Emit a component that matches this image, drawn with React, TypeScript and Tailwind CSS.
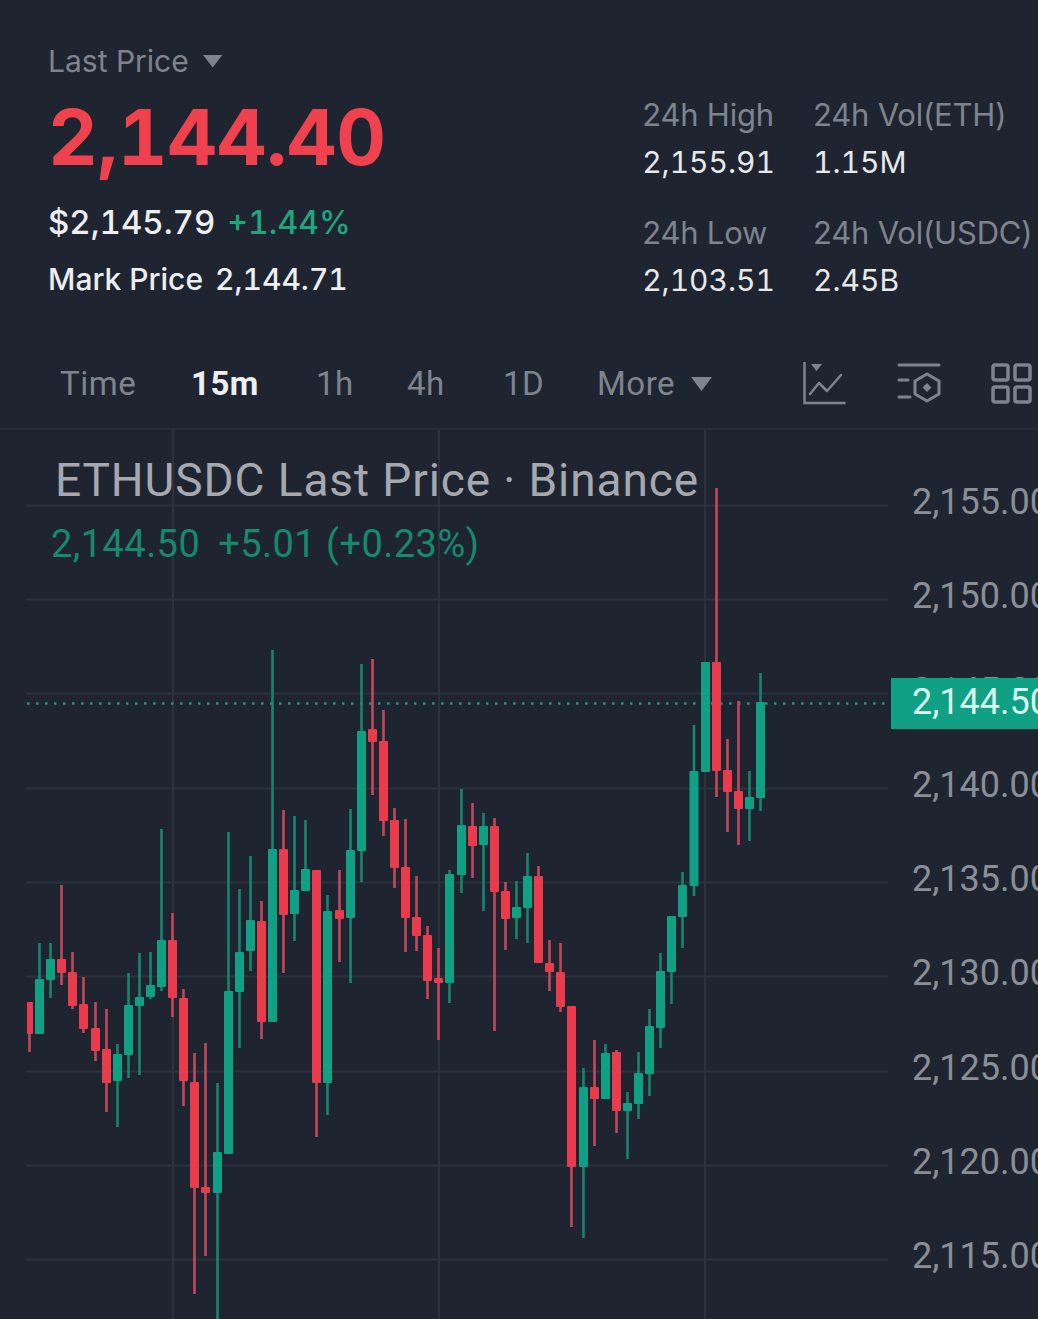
const red = "#ea3b4d";
const green = "#10a084";
const redWick = "#c2485a";
const greenWick = "#17856f";

// x, colour, wick top, body top, body bottom, wick bottom, read off the chart
const candles: [number, "r" | "g", number, number, number, number][] = [
  [29.5, "r", 1002, 1002, 1034, 1052],
  [39.5, "g", 943, 979, 1034, 1034],
  [50.5, "g", 943, 959, 980, 998],
  [61.5, "r", 885, 959, 973, 985],
  [72.5, "r", 952, 972, 1006, 1009],
  [83.5, "r", 977, 1004, 1029, 1033],
  [95.5, "r", 1002, 1028, 1051, 1061],
  [106.5, "r", 1009, 1049, 1083, 1112],
  [117.5, "g", 1044, 1054, 1081, 1127],
  [128.5, "g", 973, 1005, 1055, 1078],
  [139.5, "g", 953, 997, 1006, 1075],
  [150.5, "g", 952, 985, 997, 999],
  [161.5, "g", 829, 940, 987, 991],
  [172.5, "r", 913, 940, 998, 1017],
  [183.5, "r", 989, 998, 1081, 1106],
  [194.5, "r", 1053, 1082, 1188, 1294],
  [205.5, "r", 1043, 1187, 1193, 1256],
  [217.5, "g", 1083, 1152, 1193, 1319],
  [228.5, "g", 832, 991, 1154, 1154],
  [239.5, "g", 889, 952, 992, 1048],
  [250.5, "g", 856, 920, 951, 971],
  [261.5, "r", 901, 921, 1022, 1039],
  [272.5, "g", 650, 849, 1022, 1022],
  [283.5, "r", 810, 849, 915, 973],
  [294.5, "g", 816, 890, 914, 941],
  [305.5, "g", 820, 869, 891, 891],
  [316.5, "r", 870, 870, 1083, 1137],
  [327.5, "g", 895, 911, 1083, 1115],
  [339.5, "r", 870, 910, 919, 962],
  [350.5, "g", 809, 850, 918, 983],
  [361.5, "g", 664, 731, 851, 882],
  [372.5, "r", 659, 729, 742, 795],
  [383.5, "r", 710, 741, 821, 836],
  [394.5, "r", 808, 820, 868, 888],
  [405.5, "r", 819, 867, 918, 952],
  [416.5, "r", 876, 917, 936, 951],
  [427.5, "r", 926, 935, 981, 999],
  [438.5, "r", 948, 978, 983, 1040],
  [449.5, "g", 870, 874, 983, 1003],
  [461.5, "g", 789, 825, 875, 893],
  [472.5, "r", 803, 826, 846, 878],
  [483.5, "g", 813, 826, 845, 911],
  [494.5, "r", 818, 826, 892, 1031],
  [505.5, "r", 882, 891, 919, 950],
  [516.5, "g", 881, 907, 918, 939],
  [527.5, "g", 853, 876, 908, 943],
  [538.5, "r", 866, 876, 963, 963],
  [549.5, "r", 940, 963, 972, 991],
  [560.5, "r", 943, 972, 1007, 1012],
  [571.5, "r", 1006, 1006, 1167, 1227],
  [583.5, "g", 1068, 1087, 1167, 1238],
  [594.5, "r", 1040, 1087, 1099, 1146],
  [605.5, "g", 1044, 1053, 1099, 1099],
  [616.5, "r", 1050, 1052, 1111, 1133],
  [627.5, "g", 1092, 1103, 1111, 1159],
  [638.5, "g", 1052, 1073, 1104, 1119],
  [649.5, "g", 1009, 1026, 1074, 1096],
  [660.5, "g", 953, 971, 1028, 1048],
  [671.5, "g", 916, 916, 972, 1004],
  [682.5, "g", 872, 885, 917, 948],
  [694, "g", 725, 771, 886, 896],
  [705.5, "g", 662, 662, 772, 772],
  [716.5, "r", 488, 662, 771, 797],
  [727.5, "r", 739, 770, 792, 832],
  [738.5, "r", 701, 791, 809, 845],
  [749.5, "g", 771, 797, 809, 841],
  [760.5, "g", 673, 702, 798, 811],
];

const gridY = [505, 599, 693, 788, 882, 976, 1071, 1165, 1259];
const axis = [
  { label: "2,155.00", y: 502 },
  { label: "2,150.00", y: 596 },
  { label: "2,145.00", y: 691 },
  { label: "2,140.00", y: 785 },
  { label: "2,135.00", y: 879 },
  { label: "2,130.00", y: 973 },
  { label: "2,125.00", y: 1068 },
  { label: "2,120.00", y: 1162 },
  { label: "2,115.00", y: 1256 },
];

function CandleChart() {
  // svg is offset to page coordinates, the chart starts at y=430
  return (
    <svg className="absolute inset-0" width={1038} height={889} viewBox="0 430 1038 889">
      {gridY.map((y) => (
        <line key={y} x1={27} x2={888} y1={y + 0.5} y2={y + 0.5} stroke="#2c323c" strokeWidth={2} />
      ))}
      {[173, 439, 705].map((x) => (
        <line key={x} x1={x} x2={x} y1={430} y2={1319} stroke="#2c323c" strokeWidth={2} />
      ))}
      <line x1={27} x2={888} y1={703.5} y2={703.5} stroke="#2a8f7c" strokeWidth={2.5} strokeDasharray="2.5 6.5" />
      {candles.map(([x, c, wt, bt, bb, wb]) => (
        <g key={x}>
          <line x1={x} x2={x} y1={wt} y2={wb} stroke={c === "r" ? redWick : greenWick} strokeWidth={2.6} />
          <rect
            x={x === 29.5 ? 27 : x - 4.5}
            y={bt}
            width={x === 29.5 ? 6 : 9}
            height={bb - bt}
            rx={1}
            fill={c === "r" ? red : green}
          />
        </g>
      ))}
    </svg>
  );
}

function IndicatorIcon() {
  return (
    <svg width="44" height="46" viewBox="0 0 44 46" fill="none" stroke="#7e848e" strokeWidth="2.500">
      <path d="M1.500 1v41h41" />
      <path d="M7 33 L16 22 L24 30 L38 14" strokeLinejoin="round" strokeLinecap="round" />
      <path d="M8 3h11l-5.500 7z" fill="#7e848e" stroke="none" />
    </svg>
  );
}

function TemplateIcon() {
  return (
    <svg width="44" height="46" viewBox="0 0 44 46" fill="none" stroke="#7e848e" strokeWidth="3" strokeLinecap="round">
      <path d="M2 4h40" />
      <path d="M2 19h9M2 36h11" />
      <path d="M30 13l12 7v13l-12 7-12-7V20z" strokeLinejoin="round" />
      <path d="M30 22l4.500 4.500-4.500 4.500-4.500-4.500z" fill="#7e848e" stroke="none" />
    </svg>
  );
}

function GridIcon() {
  return (
    <svg width="42" height="42" viewBox="0 0 42 42" fill="none" stroke="#7e848e" strokeWidth="3.500">
      <rect x="2" y="2" width="15" height="15" rx="2" />
      <rect x="24" y="2" width="15" height="15" rx="2" />
      <rect x="2" y="24" width="15" height="15" rx="2" />
      <rect x="24" y="24" width="15" height="15" rx="2" />
    </svg>
  );
}

function Caret({ className }: { className: string }) {
  return <span className={`inline-block bg-[#7e848e] [clip-path:polygon(0_0,100%_0,50%_100%)] ${className}`} />;
}

function Stat({ label, value, className }: { label: string; value: string; className?: string }) {
  return (
    <div className={className}>
      <div className="text-[31px] leading-[38px] tracking-[-0.2px] text-[#7e848e]">{label}</div>
      <div className="mt-[9px] text-[30px] leading-[38px] tabular-nums text-[#e6e8ea]">{value}</div>
    </div>
  );
}

export default function App() {
  const tabs = ["15m", "1h", "4h", "1D"];
  return (
    <div className="relative h-[1319px] w-[1038px] overflow-hidden bg-[#1f2530] font-['Roboto',sans-serif]">
      {/* price header */}
      <header className="flex h-[349px] justify-between pl-[48px] pt-[43px] font-['Inter',sans-serif]">
        <div>
          <div className="flex items-center gap-[14px] text-[30px] leading-[36px] text-[#7e848e]">
            Last Price <Caret className="h-[13px] w-[20px]" />
          </div>
          <div className="mt-[14px] text-[77px] font-bold leading-[88px] tracking-[-0.3px] tabular-nums text-[#f0414f]">2,144.40</div>
          <div className="mt-[21px] flex items-baseline gap-[12px] text-[33px] font-medium leading-[40px] tabular-nums">
            <span className="text-[#eceef0]">$2,145.79</span>
            <span className="text-[32px] text-[#1fa67e]">+1.44%</span>
          </div>
          <div className="mt-[16px] flex gap-[12px] text-[30px] font-medium leading-[40px] tabular-nums text-[#eceef0]">
            <span>Mark Price</span>
            <span>2,144.71</span>
          </div>
        </div>
        <div className="flex gap-[38px] pt-[53px]">
          <div>
            <Stat label="24h High" value="2,155.91" />
            <Stat label="24h Low" value="2,103.51" className="mt-[33px]" />
          </div>
          <div className="w-[225px]">
            <Stat label="24h Vol(ETH)" value="1.15M" />
            <Stat label="24h Vol(USDC)" value="2.45B" className="mt-[33px]" />
          </div>
        </div>
      </header>

      {/* interval tabs */}
      <nav className="flex h-[81px] items-center border-b-2 border-[#282e38] pb-[9px] pl-[60px] text-[33px] tracking-[0.5px] text-[#7e848e]">
        <span className="w-[131px]">Time</span>
        <span className="w-[125px] font-bold text-[#eceef0]">{tabs[0]}</span>
        <span className="w-[91px]">{tabs[1]}</span>
        <span className="w-[96px]">{tabs[2]}</span>
        <span className="w-[94px]">{tabs[3]}</span>
        <span className="flex w-[206px] items-center gap-[16px]">
          More <Caret className="h-[14px] w-[21px]" />
        </span>
        <span className="flex items-center gap-[50px]">
          <IndicatorIcon />
          <TemplateIcon />
          <GridIcon />
        </span>
      </nav>

      {/* chart */}
      <main className="absolute inset-x-0 bottom-0 top-[430px]">
        <CandleChart />
      </main>
      <div className="relative pl-[55px] pt-[22px]">
        <div className="text-[46px] leading-[56px] tracking-[0.9px] text-[#a5a9af]">ETHUSDC Last Price · Binance</div>
        <div className="-ml-[4px] mt-[13px] flex gap-[18px] text-[38px] leading-[46px] tracking-[0.45px] text-[#16896f]">
          <span>2,144.50</span>
          <span>+5.01 (+0.23%)</span>
        </div>
      </div>

      {/* price axis */}
      {axis.map((a) => (
        <div
          key={a.label}
          className="absolute left-[912px] -translate-y-1/2 text-[36px] leading-[44px] whitespace-nowrap text-[#8a8f97]"
          style={{ top: a.y }}
        >
          {a.label}
        </div>
      ))}
      <div className="absolute left-[891px] top-[678px] flex h-[51px] w-[147px] items-center overflow-hidden bg-[#10a084] pb-[3px] pl-[21px] text-[36px] whitespace-nowrap text-[#d9f7ef]">
        2,144.50
      </div>
    </div>
  );
}
